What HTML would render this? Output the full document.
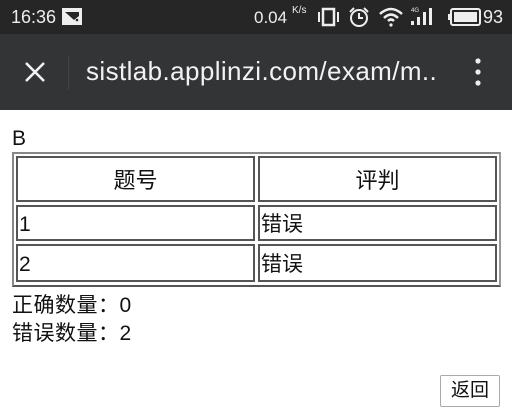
<!DOCTYPE html>
<html><head><meta charset="utf-8"><style>
*{margin:0;padding:0;box-sizing:border-box}
body{width:512px;height:415px;background:#fff;font-family:"Liberation Sans","Noto Sans CJK SC",sans-serif;position:relative;overflow:hidden;color:#111}
.sb{position:absolute;left:0;top:0;width:512px;height:34px;background:#262626;color:#eee}
.tb{position:absolute;left:0;top:34px;width:512px;height:76px;background:#333436;color:#f2f2f2}
.a{position:absolute}
.cell{position:absolute;border:2px solid #555;font-size:21px;line-height:1}
.outer{position:absolute;left:12px;top:152px;width:489px;height:135px;border:2px solid #888;border-right-color:#999;border-bottom-color:#555}
</style></head><body>
<div class="sb">
<div class="a" style="left:11px;top:7px;font-size:18px">16:36</div>
<svg class="a" style="left:62px;top:8px" width="20" height="18"><rect x="0" y="0" width="20" height="17" fill="#eee"/><path d="M3 4 L17 4 L17 8 L12 12 Z" fill="#262626"/><circle cx="15" cy="12" r="1.3" fill="#262626"/></svg>
<div class="a" style="left:254px;top:8px;font-size:17px">0.04</div>
<div class="a" style="left:292px;top:5px;font-size:10px">K/s</div>
<svg class="a" style="left:318px;top:7px" width="22" height="20"><rect x="0" y="5" width="2" height="10" fill="#eee"/><rect x="5" y="2" width="11" height="16" fill="none" stroke="#eee" stroke-width="2.5"/><rect x="19" y="5" width="2" height="10" fill="#eee"/></svg>
<svg class="a" style="left:348px;top:7px" width="22" height="22"><circle cx="11" cy="11" r="8" fill="none" stroke="#eee" stroke-width="2"/><path d="M11 6 V11 H15" stroke="#eee" stroke-width="2" fill="none"/><path d="M2 5 L6 1 M20 5 L16 1" stroke="#eee" stroke-width="2"/></svg>
<svg class="a" style="left:379px;top:7px" width="24" height="20"><path d="M1 7 Q12 -3 23 7" stroke="#eee" stroke-width="2.5" fill="none"/><path d="M5 11 Q12 4 19 11" stroke="#eee" stroke-width="2.5" fill="none"/><path d="M9 14 Q12 11 15 14" stroke="#eee" stroke-width="2.5" fill="none"/><circle cx="12" cy="18" r="1.6" fill="#eee"/></svg>
<svg class="a" style="left:410px;top:5px" width="28" height="22"><text x="1" y="7" font-size="6" fill="#eee" font-family="Liberation Sans">4G</text><rect x="1" y="16" width="3" height="4" fill="#eee"/><rect x="7" y="12" width="3" height="8" fill="#eee"/><rect x="13" y="7" width="3" height="13" fill="#eee"/><rect x="19" y="3" width="3" height="17" fill="#eee"/></svg>
<svg class="a" style="left:448px;top:8px" width="34" height="18"><rect x="3" y="1" width="29" height="16" rx="2" fill="none" stroke="#eee" stroke-width="2"/><rect x="0" y="6" width="3" height="6" fill="#eee"/><rect x="6" y="4" width="23" height="10" fill="#eee"/></svg>
<div class="a" style="left:483px;top:7px;font-size:18px">93</div>
</div>
<div class="tb">
<svg class="a" style="left:24px;top:27px" width="22" height="22"><path d="M2 2 L20 20 M20 2 L2 20" stroke="#f2f2f2" stroke-width="2.6"/></svg>
<div class="a" style="left:68px;top:22px;width:1px;height:34px;background:#444"></div>
<div class="a" style="left:86px;top:22px;font-size:26px;letter-spacing:0.4px">sistlab.applinzi.com/exam/m..</div>
<svg class="a" style="left:474px;top:22px" width="8" height="34"><circle cx="4" cy="5" r="2.6" fill="#eee"/><circle cx="4" cy="16" r="2.6" fill="#eee"/><circle cx="4" cy="27" r="2.6" fill="#eee"/></svg>
</div>
<div class="a" style="left:12px;top:127px;font-size:21px">B</div>
<div class="outer"></div>
<div class="cell" style="left:16px;top:156px;width:239px;height:46px;text-align:center;padding-top:12px;font-size:22px">题号</div>
<div class="cell" style="left:258px;top:156px;width:239px;height:46px;text-align:center;padding-top:12px;font-size:22px">评判</div>
<div class="cell" style="left:16px;top:205px;width:239px;height:36px;padding-top:7px;padding-left:1px">1</div>
<div class="cell" style="left:258px;top:205px;width:239px;height:36px;padding-top:7px;padding-left:1px">错误</div>
<div class="cell" style="left:16px;top:244px;width:239px;height:38px;padding-top:8px;padding-left:1px">2</div>
<div class="cell" style="left:258px;top:244px;width:239px;height:38px;padding-top:8px;padding-left:1px">错误</div>
<div class="a" style="left:12px;top:289px;font-size:21px;letter-spacing:0.5px">正确数量：0</div>
<div class="a" style="left:12px;top:317px;font-size:21px;letter-spacing:0.5px">错误数量：2</div>
<div class="a" style="left:440px;top:375px;width:60px;height:32px;border:1px solid #aaa;border-radius:2px;font-size:19px;text-align:center;line-height:30px">返回</div>
</body></html>
